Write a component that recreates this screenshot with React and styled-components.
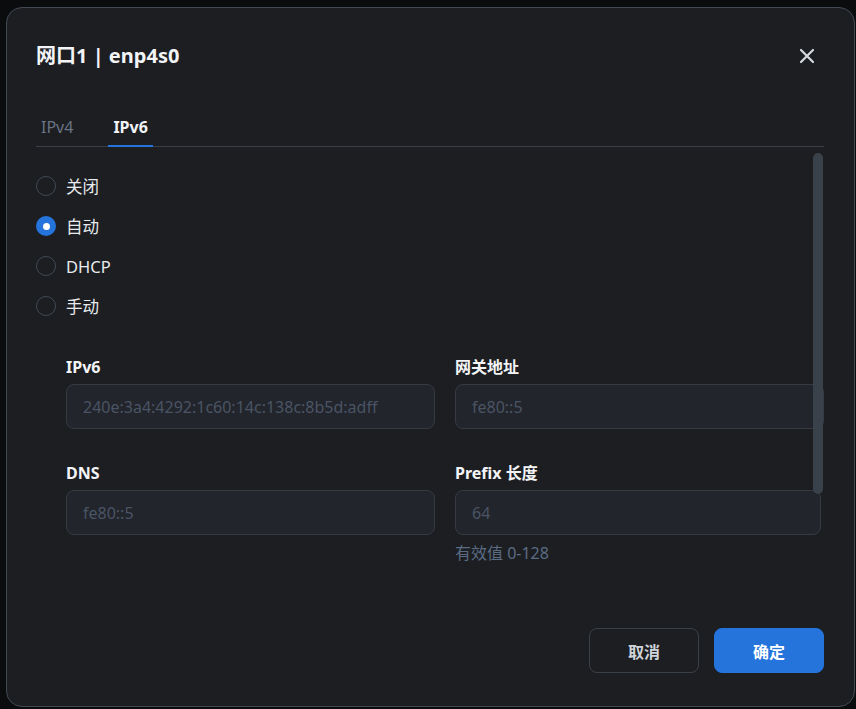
import React, { useState } from "react";
import styled, { createGlobalStyle } from "styled-components";

const Global = createGlobalStyle`
  html, body { margin: 0; padding: 0; background: #0b0c0e; }
  body { font-family: "Noto Sans", "Noto Sans CJK SC", sans-serif; }
  * { box-sizing: border-box; }
`;

const Page = styled.div`
  width: 856px;
  height: 709px;
  padding: 7px 0 0 6px;
`;

const Dialog = styled.div`
  width: 849px;
  height: 700px;
  background: #1c1e22;
  border: 1px solid #434a54;
  border-radius: 16px;
  padding: 0 30px 33px 29px;
  display: flex;
  flex-direction: column;
`;

const Header = styled.div`
  display: flex;
  align-items: center;
  justify-content: space-between;
  padding-top: 34px;
  height: 62px;
`;

const Title = styled.h2`
  margin: 0;
  font-size: 20px;
  line-height: 28px;
  font-weight: 700;
  color: #f3f4f6;
`;

const CloseButton = styled.button`
  width: 24px;
  height: 24px;
  margin-right: 5px;
  border: none;
  background: transparent;
  padding: 0;
  display: flex;
  align-items: center;
  justify-content: center;
  cursor: pointer;
`;

const Tabs = styled.div`
  margin-top: 37px;
  display: flex;
  gap: 30px;
  border-bottom: 1px solid #3a3f47;
`;

const Tab = styled.div`
  height: 40px;
  padding: 0 5px;
  display: flex;
  align-items: center;
  font-size: 16px;
  font-weight: ${(p) => (p.$active ? 700 : 400)};
  color: ${(p) => (p.$active ? "#f3f4f6" : "#6b7483")};
  border-bottom: 2px solid ${(p) => (p.$active ? "#2474dc" : "transparent")};
  margin-bottom: -1px;
  padding-top: 1px;
`;

const Body = styled.div`
  flex: 1;
  position: relative;
  overflow: hidden;
  padding-top: 19px;
`;

const Thumb = styled.div`
  position: absolute;
  right: 1px;
  top: 6px;
  width: 10px;
  height: 341px;
  border-radius: 5px;
  background: #39414a;
`;

const RadioList = styled.div`
  display: flex;
  flex-direction: column;
`;

const RadioRow = styled.label`
  height: 40px;
  display: flex;
  align-items: center;
  gap: 10px;
  font-size: 16.5px;
  color: #e8eaed;
  cursor: pointer;
`;

const RadioDot = styled.span`
  width: 20px;
  height: 20px;
  border-radius: 50%;
  border: ${(p) => (p.$checked ? "none" : "1.5px solid #434a55")};
  background: ${(p) => (p.$checked ? "#2474dc" : "transparent")};
  display: flex;
  align-items: center;
  justify-content: center;
  &::after {
    content: "";
    width: 7px;
    height: 7px;
    border-radius: 50%;
    background: #fff;
    display: ${(p) => (p.$checked ? "block" : "none")};
  }
`;

const FieldGrid = styled.div`
  margin: 31px 0 0 30px;
  display: grid;
  grid-template-columns: 369px 369px;
  column-gap: 20px;
  row-gap: 34px;
`;

const Field = styled.div`
  display: flex;
  flex-direction: column;
`;

const Label = styled.div`
  height: 20px;
  line-height: 20px;
  font-size: 16px;
  font-weight: 700;
  color: #f3f4f6;
  margin-bottom: 7px;
`;

const Input = styled.input`
  height: 45px;
  width: ${(p) => p.$w || "100%"};
  border: 1px solid #363b43;
  border-radius: 8px;
  background: #22252b;
  padding: 0 16px;
  font-family: inherit;
  font-size: 16px;
  color: #e8eaed;
  outline: none;
  &::placeholder { color: #4a5465; }
`;

const Help = styled.div`
  margin-top: 8px;
  font-size: 16px;
  line-height: 20px;
  color: #5b6c85;
`;

const Footer = styled.div`
  display: flex;
  justify-content: flex-end;
  gap: 15px;
`;

const Button = styled.button`
  width: 110px;
  height: 45px;
  border-radius: 8px;
  font-family: inherit;
  font-size: 16px;
  font-weight: 700;
  cursor: pointer;
  border: 1px solid ${(p) => (p.$primary ? "#2474dc" : "#3a4048")};
  background: ${(p) => (p.$primary ? "#2474dc" : "transparent")};
  color: ${(p) => (p.$primary ? "#ffffff" : "#cfd3d9")};
`;

const options = ["关闭", "自动", "DHCP", "手动"];

export default function App() {
  const [mode, setMode] = useState("自动");
  return (
    <Page>
      <Global />
      <Dialog>
        <Header>
          <Title>网口1 | enp4s0</Title>
          <CloseButton aria-label="close">
            <svg width="16" height="16" viewBox="0 0 16 16">
              <path d="M2 2 L14 14 M14 2 L2 14" stroke="#d6dae0" strokeWidth="2.2" strokeLinecap="round" />
            </svg>
          </CloseButton>
        </Header>
        <Tabs>
          <Tab>IPv4</Tab>
          <Tab $active>IPv6</Tab>
        </Tabs>
        <Body>
          <RadioList>
            {options.map((o) => (
              <RadioRow key={o} onClick={() => setMode(o)}>
                <RadioDot $checked={mode === o} />
                {o}
              </RadioRow>
            ))}
          </RadioList>
          <FieldGrid>
            <Field>
              <Label>IPv6</Label>
              <Input placeholder="240e:3a4:4292:1c60:14c:138c:8b5d:adff" />
            </Field>
            <Field>
              <Label>网关地址</Label>
              <Input placeholder="fe80::5" />
            </Field>
            <Field>
              <Label>DNS</Label>
              <Input placeholder="fe80::5" />
            </Field>
            <Field>
              <Label>Prefix 长度</Label>
              <Input placeholder="64" $w="366px" />
              <Help>有效值 0-128</Help>
            </Field>
          </FieldGrid>
          <Thumb />
        </Body>
        <Footer>
          <Button>取消</Button>
          <Button $primary>确定</Button>
        </Footer>
      </Dialog>
    </Page>
  );
}
